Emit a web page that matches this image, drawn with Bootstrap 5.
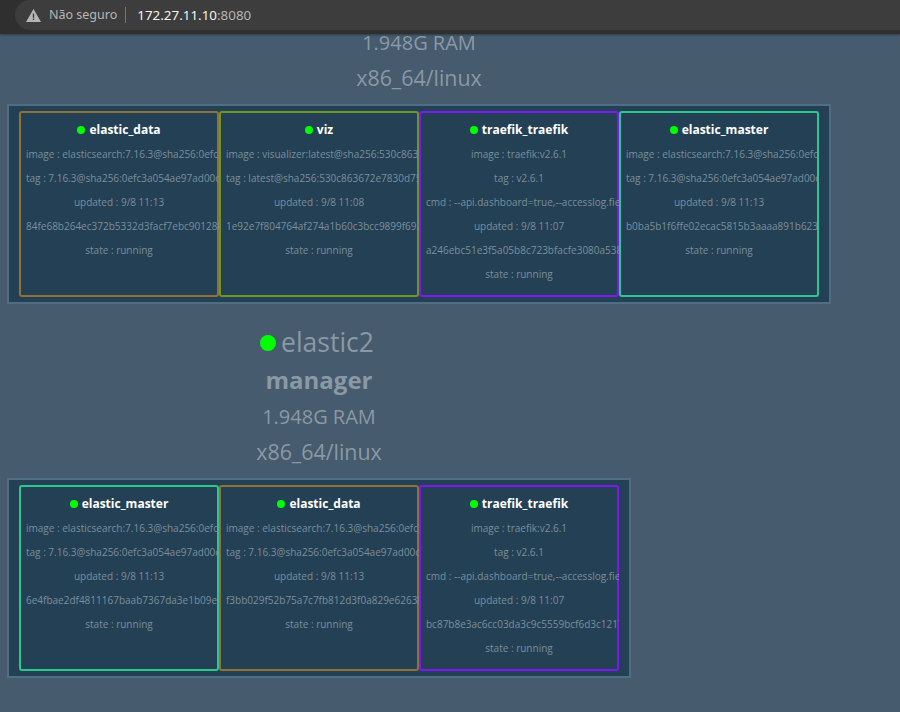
<!DOCTYPE html>
<html lang="pt">
<head>
  <meta charset="UTF-8">
  <meta name="viewport" content="width=device-width, initial-scale=1">
  <title>Swarm Visualizer</title>
  <link href="https://cdn.jsdelivr.net/npm/bootstrap@5.3.3/dist/css/bootstrap.min.css" rel="stylesheet">
  <style>
    html, body {
      height: 100%;
      margin: 0;
      overflow: hidden;
      background: #465b6d;
      font-family: "Open Sans", sans-serif;
    }
    .url-bar {
      height: 34px;
      background: #2f2f2f;
      padding-left: 15px;
      box-shadow: 0 1px 2px rgba(0, 0, 0, .35);
      position: relative;
      font-family: "Noto Sans", sans-serif;
    }
    .url-pill {
      height: 30px;
      background: #3d3d3d;
      border-radius: 15px 0 0 15px;
      padding-left: 11px;
      font-size: 13.4px;
    }
    .url-warn { color: #b5b5b5; font-size: 12.5px; }
    .url-sep { width: 1px; height: 16px; background: #777; margin: 0 11px 0 8px; }
    .url-host { color: #f2f2f2; }
    .url-port { color: #b5b5b5; }
    .stack { padding-left: 7px; }
    .node-head { color: #8a99a6; text-align: center; }
    .node-name { font-size: 26.5px; line-height: 37px; margin-top: 20px; padding-right: 4px; }
    .node-role { font-size: 24px; line-height: 37px; font-weight: 700; margin-bottom: 1px; }
    .node-line { font-size: 20px; line-height: 36px; }
    .node-line.arch { font-size: 21.4px; line-height: 34px; }
    .node-line.first-cut { margin-top: -9px; }
    .dot-big { width: 16px; height: 16px; background: #0f0; border-radius: 50%; margin-right: 5px; }
    .node-panel {
      background: #244054;
      border: 2px solid #4f6d83;
      padding: 5px 10px;
      margin-top: 9px;
    }
    .svc {
      width: 200px;
      height: 186px;
      border: 2px solid;
      border-radius: 3px;
      padding-top: 7px;
      text-align: center;
    }
    .svc-title { color: #fff; font-size: 12px; font-weight: 700; line-height: 20px; margin-bottom: 2px; }
    .dot { width: 8px; height: 8px; background: #0f0; border-radius: 50%; margin-right: 4px; }
    .svc-body {
      margin: 0 -2px 0 5px;
      padding-right: 7px;
      overflow: hidden;
      white-space: nowrap;
      color: #7b8f9c;
      font-size: 10px;
      line-height: 24px;
    }
    .svc-data { border-color: #8f7336; }
    .svc-viz { border-color: #6f9526; }
    .svc-traefik { border-color: #7f17f5; }
    .svc-master { border-color: #2bc78f; }
  </style>
</head>
<body>

  <div class="url-bar d-flex align-items-start">
    <div class="url-pill d-flex align-items-center flex-grow-1">
      <svg width="15" height="13" viewBox="0 0 15 13" class="me-2">
        <path fill="#b5b5b5" fill-rule="evenodd" d="M7.5 0 15 13H0ZM6.8 4.5v4.2h1.4V4.5ZM6.8 9.6v1.4h1.4V9.6Z"/>
      </svg>
      <span class="url-warn">Não seguro</span>
      <span class="url-sep"></span>
      <span class="url-host">172.27.11.10</span><span class="url-port">:8080</span>
    </div>
  </div>

  <div class="stack d-flex flex-column align-items-start">

    <div class="d-inline-flex flex-column">
      <div class="node-head">
        <div class="node-line first-cut">1.948G RAM</div>
        <div class="node-line arch">x86_64/linux</div>
      </div>
      <div class="node-panel d-flex">
        <div class="svc svc-data">
          <div class="svc-title d-flex align-items-center justify-content-center"><span class="dot"></span>elastic_data</div>
          <div class="svc-body">
            <div>image : elasticsearch:7.16.3@sha256:0efc3a054ae97ad00c</div>
            <div>tag : 7.16.3@sha256:0efc3a054ae97ad00c3a054ae97</div>
            <div>updated : 9/8 11:13</div>
            <div>84fe68b264ec372b5332d3facf7ebc901288a3f1c2d4</div>
            <div>state : running</div>
          </div>
        </div>
        <div class="svc svc-viz">
          <div class="svc-title d-flex align-items-center justify-content-center"><span class="dot"></span>viz</div>
          <div class="svc-body">
            <div>image : visualizer:latest@sha256:530c863672e7830d75</div>
            <div>tag : latest@sha256:530c863672e7830d75a1b2c3d4e5f6</div>
            <div>updated : 9/8 11:08</div>
            <div>1e92e7f804764af274a1b60c3bcc9899f692a1b2c3d4</div>
            <div>state : running</div>
          </div>
        </div>
        <div class="svc svc-traefik">
          <div class="svc-title d-flex align-items-center justify-content-center"><span class="dot"></span>traefik_traefik</div>
          <div class="svc-body">
            <div>image : traefik:v2.6.1</div>
            <div>tag : v2.6.1</div>
            <div>cmd : --api.dashboard=true,--accesslog.fields.names</div>
            <div>updated : 9/8 11:07</div>
            <div>a246ebc51e3f5a05b8c723bfacfe3080a5381c2d3e4f</div>
            <div>state : running</div>
          </div>
        </div>
        <div class="svc svc-master">
          <div class="svc-title d-flex align-items-center justify-content-center"><span class="dot"></span>elastic_master</div>
          <div class="svc-body">
            <div>image : elasticsearch:7.16.3@sha256:0efc3a054ae97ad00c</div>
            <div>tag : 7.16.3@sha256:0efc3a054ae97ad00c3a054ae97</div>
            <div>updated : 9/8 11:13</div>
            <div>b0ba5b1f6ffe02ecac5815b3aaaa891b6231a2b3c4d5</div>
            <div>state : running</div>
          </div>
        </div>
      </div>
    </div>

    <div class="d-inline-flex flex-column">
      <div class="node-head">
        <div class="node-name d-flex align-items-center justify-content-center"><span class="dot-big"></span>elastic2</div>
        <div class="node-role">manager</div>
        <div class="node-line">1.948G RAM</div>
        <div class="node-line arch">x86_64/linux</div>
      </div>
      <div class="node-panel d-flex">
        <div class="svc svc-master">
          <div class="svc-title d-flex align-items-center justify-content-center"><span class="dot"></span>elastic_master</div>
          <div class="svc-body">
            <div>image : elasticsearch:7.16.3@sha256:0efc3a054ae97ad00c</div>
            <div>tag : 7.16.3@sha256:0efc3a054ae97ad00c3a054ae97</div>
            <div>updated : 9/8 11:13</div>
            <div>6e4fbae2df4811167baab7367da3e1b09e1a2b3c4d5e</div>
            <div>state : running</div>
          </div>
        </div>
        <div class="svc svc-data">
          <div class="svc-title d-flex align-items-center justify-content-center"><span class="dot"></span>elastic_data</div>
          <div class="svc-body">
            <div>image : elasticsearch:7.16.3@sha256:0efc3a054ae97ad00c</div>
            <div>tag : 7.16.3@sha256:0efc3a054ae97ad00c3a054ae97</div>
            <div>updated : 9/8 11:13</div>
            <div>f3bb029f52b75a7c7fb812d3f0a829e62638a1b2c3d4</div>
            <div>state : running</div>
          </div>
        </div>
        <div class="svc svc-traefik">
          <div class="svc-title d-flex align-items-center justify-content-center"><span class="dot"></span>traefik_traefik</div>
          <div class="svc-body">
            <div>image : traefik:v2.6.1</div>
            <div>tag : v2.6.1</div>
            <div>cmd : --api.dashboard=true,--accesslog.fields.names</div>
            <div>updated : 9/8 11:07</div>
            <div>bc87b8e3ac6cc03da3c9c5559bcf6d3c1217a1b2c3d4</div>
            <div>state : running</div>
          </div>
        </div>
      </div>
    </div>

  </div>

  <script src="https://cdn.jsdelivr.net/npm/bootstrap@5.3.3/dist/js/bootstrap.bundle.min.js"></script>
</body>
</html>
